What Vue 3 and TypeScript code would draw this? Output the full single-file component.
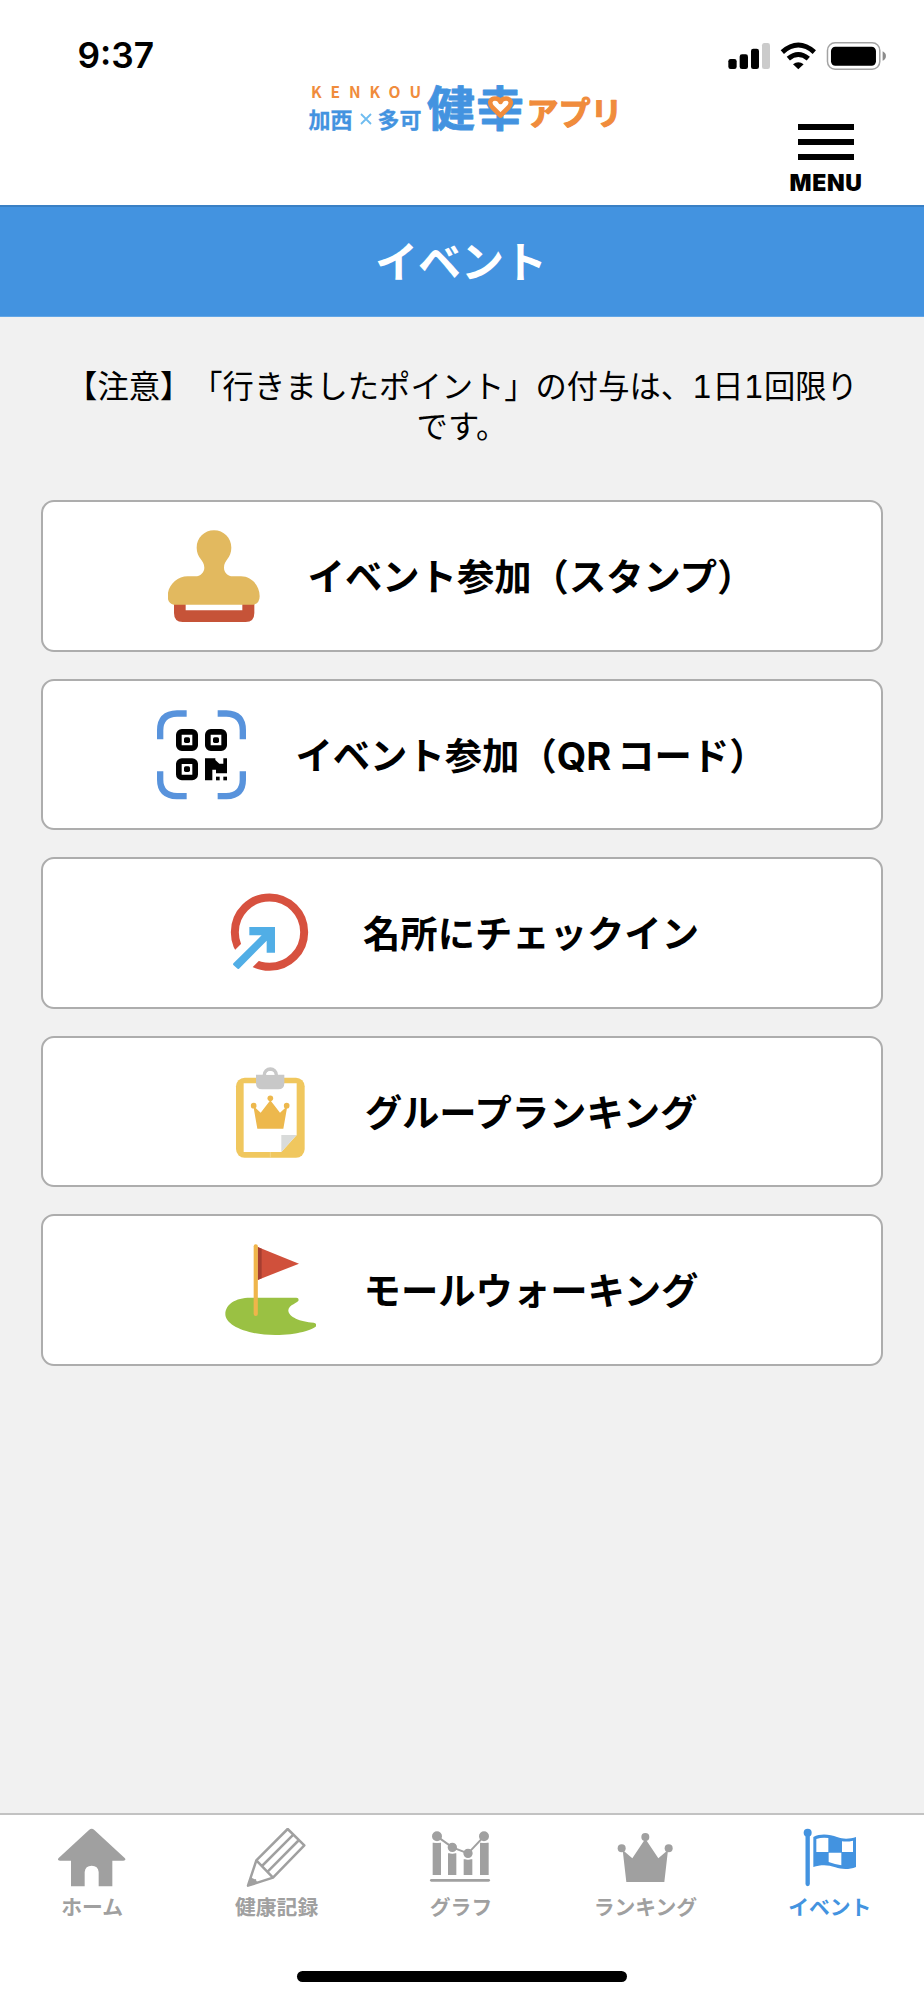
<script setup lang="ts">
interface EventLink {
  id: string
  before: string
  latin?: string
  after?: string
  viewBox: string
}

interface Tab {
  id: string
  label: string
  viewBox: string
  active?: boolean
}

const links: EventLink[] = [
  { id: 'stamp', before: 'イベント参加（スタンプ）', viewBox: '413 119 276 276' },
  { id: 'qr', before: 'イベント参加（', latin: 'QR', after: 'コード）', viewBox: '375 656 276 276' },
  { id: 'checkin', before: '名所にチェックイン', viewBox: '69 81 276 276' },
  { id: 'ranking', before: 'グループランキング', viewBox: '73 77 276 276' },
  { id: 'walking', before: 'モールウォーキング', viewBox: '71 101 276 276' },
]

const tabs: Tab[] = [
  { id: 'home', label: 'ホーム', viewBox: '168 84 216 180' },
  { id: 'record', label: '健康記録', viewBox: '722 84 216 180' },
  { id: 'graph', label: 'グラフ', viewBox: '1275 84 216 180' },
  { id: 'rank', label: 'ランキング', viewBox: '466 84 216 180' },
  { id: 'event', label: 'イベント', viewBox: '1019 84 216 180', active: true },
]
</script>

<template>
  <div class="screen">
    <header class="header">
      <div class="status">
        <span class="time">9:37</span>
        <svg class="indicators" viewBox="798 124 478 86">
          <rect x="799" y="175" width="25" height="30" rx="7" />
          <rect x="833" y="161" width="25" height="44" rx="7" />
          <rect x="867" y="144" width="24" height="61" rx="7" />
          <rect x="900" y="127" width="24" height="78" rx="7" fill="#cbcbcb" />
          <g fill="none" stroke="#000" stroke-width="15">
            <path d="M961 154 Q1009 112 1057 154" />
            <path d="M979 174 Q1009 149 1039 174" />
          </g>
          <path d="M993 191 Q1009 178 1025 191 L1009 206Z" />
          <rect x="1096.500" y="126.500" width="157" height="79" rx="23" fill="none" stroke="#a3a3a3" stroke-width="4.500" />
          <rect x="1107" y="138" width="135" height="57" rx="13" />
          <path d="M1262 152 Q1272 157 1272 166 Q1272 176 1262 180Z" fill="#8c8c8c" />
        </svg>
      </div>
      <div class="brand">
        <svg class="logo" viewBox="300 70 324 70">
          <text class="roman" x="311" y="98" textLength="110">KENKOU</text>
          <text class="city" x="308.500" y="127.500" textLength="44">加西</text>
          <path d="M361 114 l10 10 M371 114 l-10 10" stroke="#6fbcf0" stroke-width="1.800" fill="none" />
          <text class="city" x="377.500" y="127.500" textLength="44">多可</text>
          <text class="kanji" x="427" y="126" textLength="97">健幸</text>
          <path
            d="M500.500 115.500 L492.500 107.500 C488 102.500 491 98.500 495 98.500 C498 98.500 500 100.500 500.500 102 C501 100.500 503 98.500 506 98.500 C510 98.500 513 102.500 508.500 107.500Z"
            fill="#fff" stroke="#f08c3c" stroke-width="4.600" stroke-linejoin="round"
          />
          <text class="kana" x="526.500" y="125" textLength="96">アプリ</text>
        </svg>
        <button class="menu" type="button">
          <span class="bar"></span>
          <span class="bar"></span>
          <span class="bar"></span>
          <span class="menu-label">MENU</span>
        </button>
      </div>
    </header>

    <h1 class="title">イベント</h1>

    <main class="content">
      <p class="notice">【注意】「行きましたポイント」の付与は、<span class="num">1</span>日<span class="num">1</span>回限り<br>です。</p>

      <nav class="links">
        <a v-for="link in links" :key="link.id" class="card">
          <svg class="card-icon" :viewBox="link.viewBox">
            <g v-if="link.id === 'stamp'">
              <path fill="#c65338" d="M431 340H466V360H636V340H672V368Q672 395 646 395H457Q431 395 431 368Z" />
              <path fill="#e2b95f" d="M551 120C580 120 603 143 603 172C603 204 581 208 581 232C581 248 594 258 607 258H632C663 258 688 285 688 318Q688 339 670 343H430Q412 339 412 318C412 285 440 258 472 258H495C510 258 522 246 522 232C522 208 499 204 499 172C499 143 522 120 551 120Z" />
            </g>
            <g v-else-if="link.id === 'qr'">
              <g fill="none" stroke="#5893dc" stroke-width="19">
                <path d="M470 669.500H441Q390.500 671 390.500 720V747" />
                <path d="M563 669.500H589Q638.500 671 638.500 720V747" />
                <path d="M470 917.500H441Q390.500 915 390.500 868V843" />
                <path d="M563 917.500H589Q638.500 915 638.500 868V843" />
              </g>
              <g fill="#fff" stroke="#000" stroke-width="17">
                <rect x="446.500" y="724.500" width="49" height="49" rx="9" />
                <rect x="533.500" y="724.500" width="49" height="49" rx="9" />
                <rect x="446.500" y="812.500" width="49" height="49" rx="9" />
              </g>
              <rect x="462" y="741" width="18" height="17" rx="5" />
              <rect x="549" y="741" width="18" height="17" rx="5" />
              <rect x="462" y="828" width="18" height="17" rx="5" />
              <path d="M525 804H556V809L568 820H580V804H591V849H558V838H547V870H525Z" />
              <rect x="558" y="859" width="11" height="11" />
              <rect x="580" y="859" width="11" height="11" />
            </g>
            <g v-else-if="link.id === 'checkin'">
              <circle cx="208.500" cy="216.500" r="104" fill="none" stroke="#d7513f" stroke-width="24" />
              <path d="M60 367L160 267" stroke="#fff" stroke-width="73.500" />
              <path fill="#51aee6" d="M148 201H225V278H200V242L117 326Q114 329 111 325L100 315Q98 312 101 309L185 226H148Z" />
            </g>
            <g v-else-if="link.id === 'ranking'">
              <rect x="106" y="112" width="206" height="240" rx="26" fill="#f0c75e" />
              <path fill="#fff" d="M129 129H288V284L242 335H129Z" />
              <path fill="#d9dbda" d="M242 284H288L242 335Z" />
              <path d="M209 335V352" stroke="#f6dc98" stroke-width="2" />
              <circle cx="209" cy="104" r="17.500" fill="#fff" stroke="#c8c8c8" stroke-width="11" />
              <path fill="#c8c8c8" d="M166 103H251V129Q251 147 233 147H184Q166 147 166 129Z" />
              <path fill="#fff" d="M196 103Q199 93 209 93Q219 93 222 103Z" />
              <g fill="#edb84d">
                <path d="M170 265L158 197L180 217L209 180L238 217L260 197L248 265Z" />
                <circle cx="159" cy="196" r="8.500" />
                <circle cx="209" cy="174" r="8.500" />
                <circle cx="258" cy="196" r="8.500" />
              </g>
            </g>
            <g v-else>
              <path fill="#9ac143" d="M150 262H288Q295 262 295 269C295 278 264 283 264 300C264 320 300 335 340 337Q348 339 348 345C348 355 295 374 225 374C140 374 75 345 75 312C75 282 105 262 150 262Z" />
              <path fill="#d0503b" d="M172 110L296 160L172 209Z" />
              <path fill="#a63e31" d="M172 110L184 115V204L172 209Z" />
              <rect x="160" y="102" width="12.500" height="215" rx="6" fill="#efb54a" />
            </g>
          </svg>
          <span class="card-label">{{ link.before }}<span v-if="link.latin" class="latin">{{ link.latin }}</span>{{ link.after }}</span>
        </a>
      </nav>
    </main>

    <footer class="footer">
      <nav class="tabs">
        <a v-for="tab in tabs" :key="tab.id" class="tab" :class="{ active: tab.active }">
          <svg class="tab-icon" :viewBox="tab.viewBox" fill="currentColor">
            <path
              v-if="tab.id === 'home'"
              d="M267 90Q275 83 283 90L374 174Q380 181 370 182H337V259H296V216Q294 197 275 197Q256 197 254 216V259H213V182H180Q170 181 176 174Z"
            />
            <g v-else-if="tab.id === 'record'">
              <path
                d="M862 87L912 136L818 233L743 257L768 181ZM768 181L818 233M785 198L879 104M802 215L896 120"
                fill="none" stroke="currentColor" stroke-width="7.500" stroke-linejoin="round"
              />
              <path d="M741 259L751 229Q757 240 767 237Q767 247 777 247Z" />
            </g>
            <g v-else-if="tab.id === 'graph'">
              <path d="M1298 128H1323V225H1298ZM1344 160H1369V225H1344ZM1391 178H1417V225H1391ZM1440 128H1466V225H1440Z" />
              <g stroke="#fff" stroke-width="5">
                <circle cx="1311" cy="109" r="17.500" />
                <circle cx="1357" cy="142" r="16.500" />
                <circle cx="1404" cy="160" r="16.500" />
                <circle cx="1452" cy="109" r="17.500" />
              </g>
              <path d="M1311 109L1357 142L1404 160L1452 109" fill="none" stroke="currentColor" stroke-width="6" />
              <path d="M1294 241H1466" stroke="currentColor" stroke-width="8" stroke-linecap="round" />
            </g>
            <g v-else-if="tab.id === 'rank'">
              <path d="M518 246L507 150L536 175L575 116L614 175L643 150L632 246Z" />
              <circle cx="504" cy="145" r="12" />
              <circle cx="575" cy="111" r="12" />
              <circle cx="645" cy="145" r="12" />
            </g>
            <g v-else>
              <circle cx="1060" cy="98" r="12" />
              <path d="M1060 100V252" stroke="currentColor" stroke-width="13" stroke-linecap="round" />
              <path d="M1077 111C1100 99 1128 104 1148 111C1170 119 1188 116 1205 111V201C1185 209 1163 209 1143 202C1120 193 1098 194 1077 201Z" />
              <path fill="#fff" d="M1086 117Q1103 111 1122 114V156H1086ZM1163 124Q1180 126 1196 122V156H1163ZM1123 158H1161V196Q1142 193 1123 186Z" />
            </g>
          </svg>
          <span class="tab-label">{{ tab.label }}</span>
        </a>
      </nav>
      <div class="home-indicator"></div>
    </footer>
  </div>
</template>

<style>
body {
  margin: 0;
}
</style>

<style scoped>
.screen {
  display: flex;
  flex-direction: column;
  width: 924px;
  height: 2000px;
  overflow: hidden;
  background: #f1f1f1;
  color: #000;
  font-family: "Noto Sans CJK JP", sans-serif;
  text-spacing-trim: space-all;
}

.header {
  height: 205px;
  flex: none;
  background: #fff;
}

.status {
  display: flex;
  justify-content: space-between;
  align-items: center;
  box-sizing: border-box;
  height: 80px;
  padding: 32px 37px 0 77.500px;
}

.time {
  font: 600 35.300px/48px Inter, sans-serif;
}

.indicators {
  width: 159.300px;
  height: 28.700px;
}

.brand {
  display: grid;
  grid-template-columns: 1fr 324px 1fr;
  align-items: start;
}

.logo {
  grid-column: 2;
  width: 324px;
  height: 70px;
  margin-top: -10px;
  overflow: visible;
}

.logo text {
  font-weight: 700;
}

.roman {
  font-size: 15.500px;
  fill: #f08c3c;
}

.city {
  font-size: 22px;
  fill: #4393e0;
  stroke: #4393e0;
  stroke-width: 0.300px;
}

.kanji {
  font-size: 48px;
  fill: #4393e0;
  stroke: #4393e0;
  stroke-width: 0.800px;
  stroke-linejoin: round;
}

.kana {
  font-size: 32px;
  fill: #f08c3c;
  stroke: #f08c3c;
  stroke-width: 1.200px;
  stroke-linejoin: round;
}

.menu {
  grid-column: 3;
  justify-self: end;
  display: flex;
  flex-direction: column;
  align-items: center;
  width: 80px;
  margin: 44px 58px 0 0;
  padding: 0;
  border: 0;
  background: none;
  color: #000;
}

.bar {
  width: 56px;
  height: 5.500px;
  margin-bottom: 9.700px;
  background: #000;
}

.menu-label {
  margin-top: -1px;
  font: 900 23px/28px Inter, sans-serif;
  letter-spacing: 0.600px;
}

.title {
  flex: none;
  box-sizing: border-box;
  height: 112px;
  margin: 0;
  border-top: 2px solid #3a80c4;
  border-bottom: 1px solid #62a6e6;
  background: #4393e0;
  color: #fff;
  font-size: 43px;
  font-weight: 700;
  line-height: 104px;
  text-align: center;
  text-indent: -2px;
}

.content {
  flex: 1;
  padding: 48px 41px 0;
}

.notice {
  height: 135.300px;
  margin: 0;
  font-size: 31.300px;
  line-height: 39.500px;
  text-align: center;
  white-space: nowrap;
}

.num {
  font-family: Inter, sans-serif;
  font-variant-numeric: tabular-nums;
  line-height: 0;
}

.links {
  display: flex;
  flex-direction: column;
  gap: 27px;
}

.card {
  display: flex;
  justify-content: center;
  align-items: center;
  gap: 48px;
  box-sizing: border-box;
  height: 151.500px;
  padding-right: 2px;
  border: 2px solid #adadad;
  border-radius: 13px;
  background: #fff;
}

.card-icon {
  width: 92px;
  height: 92px;
}

.card-label {
  margin-top: -2px;
  font-size: 37.330px;
  font-weight: 700;
  line-height: 50px;
  white-space: nowrap;
}

.latin {
  padding-right: 6px;
  font-family: Inter, sans-serif;
  font-size: 38px;
  line-height: 0;
}

.footer {
  flex: none;
  box-sizing: border-box;
  height: 187px;
  border-top: 2px solid #c2c2c2;
  background: #fff;
}

.tabs {
  display: flex;
  height: 156px;
  padding-right: 2px;
}

.tab {
  flex: 1;
  display: flex;
  flex-direction: column;
  align-items: center;
  padding-top: 13px;
  color: #a0a0a0;
}

.tab.active {
  color: #4393e0;
}

.tab-icon {
  width: 72px;
  height: 60px;
}

.tab-label {
  margin-top: 3px;
  font-size: 20.800px;
  font-weight: 700;
  line-height: 30px;
}

.home-indicator {
  width: 330px;
  height: 11px;
  margin: 0 auto;
  border-radius: 6px;
  background: #000;
}
</style>
